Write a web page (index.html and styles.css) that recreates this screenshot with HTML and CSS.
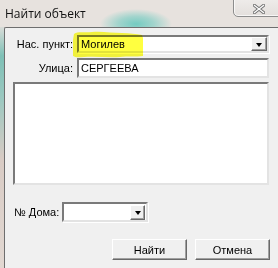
FILE: index.html
```html
<!DOCTYPE html>
<html lang="ru">
<head>
    <meta charset="UTF-8">
    <title>Найти объект</title>
    <link rel="stylesheet" href="styles.css">
</head>
<body>
    <div class="window">
        <div class="titlebar">
            <span class="title">Найти объект</span>
            <button class="close-btn" aria-label="Закрыть">
                <svg width="12" height="10" viewBox="0 0 12 10">
                    <path d="M1.5 1.5 L10.5 8.5 M10.5 1.5 L1.5 8.5" stroke="#6f6f6f" stroke-width="3.2" stroke-linecap="square"/>
                    <path d="M1.5 1.5 L10.5 8.5 M10.5 1.5 L1.5 8.5" stroke="#fbfbfb" stroke-width="1.4" stroke-linecap="square"/>
                </svg>
            </button>
        </div>
        <div class="frame-body">
            <div class="frame-left"></div>
            <div class="client">
                <div class="row">
                    <label class="field-label" for="town">Нас. пункт:</label>
                    <div class="combo combo-town" id="town">
                        <span class="combo-value">Могилев</span>
                        <span class="drop-btn"><span class="arrow"></span></span>
                    </div>
                </div>
                <div class="row row-street">
                    <label class="field-label" for="street">Улица:</label>
                    <div class="edit" id="street">СЕРГЕЕВА</div>
                </div>
                <div class="listbox"></div>
                <div class="row row-house">
                    <label class="house-label" for="house">№ Дома:</label>
                    <div class="combo combo-house" id="house">
                        <span class="combo-value"></span>
                        <span class="drop-btn"><span class="arrow"></span></span>
                    </div>
                </div>
                <div class="buttons">
                    <button class="btn">Найти</button>
                    <button class="btn">Отмена</button>
                </div>

                <svg class="marker" width="74" height="30" viewBox="0 0 74 30">
                    <path d="M2 4 C6 1 12 3 20 2 C30 1 40 3 50 3 C58 3 64 4 70 5 L71 8 L71 26 C64 27 56 26 48 27 C36 28 24 26 12 27 C8 27 4 28 1 26 L1 10 Z" fill="#ffff1e"/>
                </svg>
            </div>
        </div>
    </div>
</body>
</html>
```

FILE: styles.css
```css
body {
    margin: 0;
    width: 278px;
    height: 268px;
    overflow: hidden;
    font-family: 'Liberation Sans', Arial, sans-serif;
    font-size: 11px;
    color: #000;
}

.window {
    display: flex;
    flex-direction: column;
    height: 268px;
    background: radial-gradient(ellipse 36px 15px at 136px 24px, #74cbc1 0%, rgba(116, 203, 193, 0.6) 50%, rgba(116, 203, 193, 0) 100%), #e7e2de;
}

.titlebar {
    height: 27px;
    position: relative;
    flex-shrink: 0;
}

.title {
    position: absolute;
    left: 5px;
    top: 5px;
    font-family: 'Open Sans', 'Liberation Sans', sans-serif;
    font-size: 12px;
    color: #111;
}

.close-btn {
    position: absolute;
    left: 233px;
    top: -2px;
    width: 50px;
    height: 19px;
    padding: 0;
    border: 1px solid #8d8d8d;
    border-radius: 0 0 0 5px;
    background: linear-gradient(#efecea, #e3dfdc);
    box-shadow: inset 0 0 0 1px rgba(255, 255, 255, 0.7);
}

.close-btn svg {
    position: absolute;
    left: 19px;
    top: 5px;
}

.frame-body {
    flex: 1;
    display: flex;
}

.frame-left {
    width: 4px;
    background: linear-gradient(#d9dcd8, #7ec0b6 12%, #9cc8c0 30%, #d8cbc4 55%, #e2d8d2);
}

.client {
    flex: 1;
    position: relative;
    background: #f0f0f0;
    border-top: 1px solid #6e6e6e;
    border-left: 1px solid #6e6e6e;
    border-top-left-radius: 2px;
    padding: 7px 8px 0 8px;
    display: flex;
    flex-direction: column;
}

.row {
    display: flex;
    align-items: center;
}

.field-label {
    width: 60px;
    margin-right: 4px;
    text-align: right;
    flex-shrink: 0;
}

.combo {
    display: flex;
    align-items: center;
    box-sizing: border-box;
    background: #fff;
    border: 2px solid;
    border-color: #7a7a7a #e3e3e3 #e3e3e3 #7a7a7a;
    box-shadow: 1px 1px 0 #fff;
}

.combo-town {
    width: 192px;
    height: 18px;
}

.combo-value {
    flex: 1;
    padding-left: 2px;
    line-height: 14px;
}

.drop-btn {
    width: 16px;
    height: 14px;
    box-sizing: border-box;
    background: #f0f0f0;
    border: 1px solid;
    border-color: #fff #696969 #696969 #fff;
    box-shadow: inset -1px -1px 0 #a0a0a0;
    display: flex;
    align-items: center;
    justify-content: center;
}

.arrow {
    width: 0;
    height: 0;
    border-left: 3.5px solid transparent;
    border-right: 3.5px solid transparent;
    border-top: 4px solid #000;
    margin-top: 1px;
}

.row-street {
    margin-top: 5px;
}

.edit {
    box-sizing: border-box;
    width: 192px;
    height: 20px;
    background: #fff;
    border: 2px solid;
    border-color: #7a7a7a #e3e3e3 #e3e3e3 #7a7a7a;
    padding-left: 2px;
    line-height: 16px;
}

.listbox {
    margin-top: 4px;
    width: 256px;
    height: 103px;
    box-sizing: border-box;
    background: #fff;
    border: 2px solid;
    border-color: #7a7a7a #e3e3e3 #e3e3e3 #7a7a7a;
}

.row-house {
    margin-top: 17px;
}

.house-label {
    width: 48px;
    padding-left: 1px;
    flex-shrink: 0;
}

.combo-house {
    width: 86px;
    height: 20px;
}

.combo-house .drop-btn {
    width: 15px;
    height: 15px;
    margin-right: 1px;
}

.buttons {
    margin-top: 17px;
    display: flex;
    justify-content: flex-end;
    gap: 8px;
}

.btn {
    width: 75px;
    height: 21px;
    padding: 0;
    background: #f0f0f0;
    border: 1px solid;
    border-color: #fff #696969 #696969 #fff;
    box-shadow: inset -1px -1px 0 #a0a0a0;
    font-family: 'Liberation Sans', Arial, sans-serif;
    font-size: 11px;
    color: #000;
}

.marker {
    position: absolute;
    left: 67px;
    top: 2px;
    mix-blend-mode: multiply;
    opacity: 0.85;
}
```
